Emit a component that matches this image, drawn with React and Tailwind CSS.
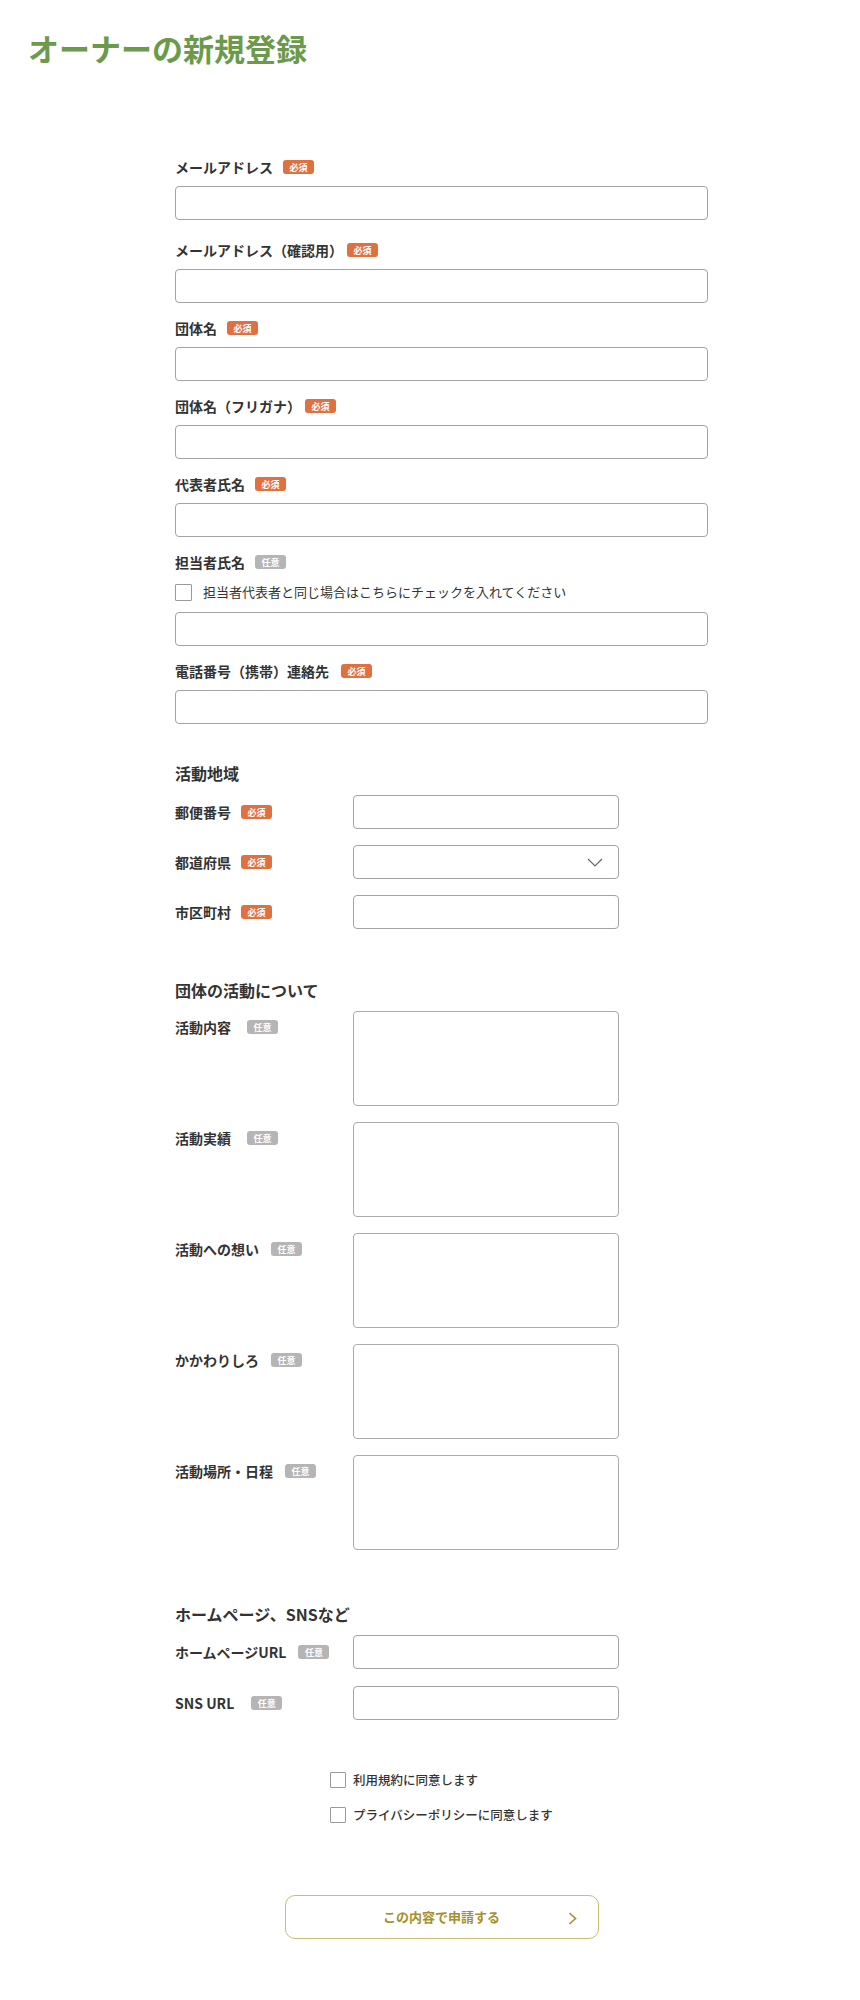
import React from "react";

const Badge = ({ required, className = "" }) => (
  <span
    className={
      "inline-flex items-center justify-center w-[31px] h-[14px] rounded-[3px] text-[9px] font-bold leading-none text-white " +
      (required ? "bg-[#e0703f] " : "bg-[#b5b5b5] ") +
      className
    }
  >
    {required ? "必須" : "任意"}
  </span>
);

const Label = ({ children, required, gap = "ml-2.5" }) => (
  <div className="flex items-center h-5 text-[14px] leading-5 font-bold text-[#333]">
    <span>{children}</span>
    <Badge required={required} className={gap} />
  </div>
);

const TextInput = ({ className = "" }) => (
  <input
    type="text"
    className={"block h-[34px] rounded-[4px] border border-[#a3a3a3] bg-white px-3 text-sm outline-none " + className}
  />
);

const Box = ({ className = "" }) => (
  <span className={"inline-block shrink-0 border border-[#9a9a9a] rounded-[1px] bg-white " + className}></span>
);

const Field = ({ label, required, gap, mb = "mb-[15px]" }) => (
  <div className={mb}>
    <Label required={required} gap={gap}>{label}</Label>
    <TextInput className="mt-[9px] w-full" />
  </div>
);

const Row = ({ label, required, gap, children }) => (
  <div className="flex items-center">
    <div className="w-[178px]">
      <Label required={required} gap={gap}>{label}</Label>
    </div>
    {children}
  </div>
);

const AreaRow = ({ label, gap }) => (
  <div className="flex items-start">
    <div className="w-[178px] pt-[6px]">
      <Label required={false} gap={gap}>{label}</Label>
    </div>
    <textarea className="block w-[266px] h-[95px] resize-none rounded-[4px] border border-[#ababab] bg-white outline-none" />
  </div>
);

const Heading = ({ children, className = "" }) => (
  <h2 className={"text-[16px] leading-6 font-bold text-[#333] " + className}>{children}</h2>
);

export default function App() {
  return (
    <div className="min-h-screen bg-white font-['Noto_Sans_CJK_JP',sans-serif] text-[#333]">
      <h1 className="pl-[28px] pt-[25px] text-[31px] leading-[46px] font-bold text-[#6c9a4b]">
        オーナーの新規登録
      </h1>

      <form className="ml-[175px] w-[533px] mt-[86px] pb-[60px]">
        <Field label="メールアドレス" required mb="mb-5" />
        <Field label="メールアドレス（確認用）" required gap="ml-1" />
        <Field label="団体名" required />
        <Field label="団体名（フリガナ）" required gap="ml-1" />
        <Field label="代表者氏名" required />

        <div className="mb-[15px]">
          <Label required={false}>担当者氏名</Label>
          <label className="mt-[9px] flex items-center h-[22px] gap-[11px] text-[13px] text-[#333]">
            <Box className="w-[17px] h-[17px]" />
            <span>担当者代表者と同じ場合はこちらにチェックを入れてください</span>
          </label>
          <TextInput className="mt-[9px] w-full" />
        </div>

        <Field label="電話番号（携帯）連絡先" required gap="ml-3" mb="mb-0" />

        {/* 活動地域 */}
        <Heading className="mt-[37px] mb-[10px]">活動地域</Heading>
        <div className="flex flex-col gap-[16px]">
          <Row label="郵便番号" required>
            <TextInput className="w-[266px]" />
          </Row>
          <Row label="都道府県" required>
            <div className="relative w-[266px] h-[34px] rounded-[4px] border border-[#a3a3a3] bg-white">
              <svg
                className="absolute right-[15px] top-[12px]"
                width="16"
                height="9"
                viewBox="0 0 16 9"
                fill="none"
                stroke="#666"
                strokeWidth="1.2"
              >
                <path d="M1 1l7 7 7-7" />
              </svg>
            </div>
          </Row>
          <Row label="市区町村" required>
            <TextInput className="w-[266px]" />
          </Row>
        </div>

        {/* 団体の活動について */}
        <Heading className="mt-[49px] mb-[9px]">団体の活動について</Heading>
        <div className="flex flex-col gap-[16px]">
          <AreaRow label="活動内容" gap="ml-4" />
          <AreaRow label="活動実績" gap="ml-4" />
          <AreaRow label="活動への想い" gap="ml-3" />
          <AreaRow label="かかわりしろ" gap="ml-3" />
          <AreaRow label="活動場所・日程" gap="ml-3" />
        </div>

        {/* ホームページ、SNSなど */}
        <Heading className="mt-[52px] mb-[9px]">ホームページ、SNSなど</Heading>
        <div className="flex flex-col gap-[17px]">
          <Row label="ホームページURL" required={false} gap="ml-3">
            <TextInput className="w-[266px]" />
          </Row>
          <Row label="SNS URL" required={false} gap="ml-[17px]">
            <TextInput className="w-[266px]" />
          </Row>
        </div>

        <div className="mx-auto w-fit mt-[50px] flex flex-col gap-[15px]">
          <label className="flex items-center h-5 gap-[7px] text-[12.5px] font-medium text-[#333]">
            <Box className="w-4 h-4" />
            <span>利用規約に同意します</span>
          </label>
          <label className="flex items-center h-5 gap-[7px] text-[12.5px] font-medium text-[#333]">
            <Box className="w-4 h-4" />
            <span>プライバシーポリシーに同意します</span>
          </label>
        </div>

        <button
          type="button"
          className="relative mx-auto mt-[70px] flex items-center justify-center w-[314px] h-[44px] rounded-[10px] border border-[#cbbd72] bg-white text-[13px] font-bold text-[#a68f2c]"
        >
          この内容で申請する
          <svg
            className="absolute right-[21px] top-[16px]"
            width="9"
            height="13"
            viewBox="0 0 9 13"
            fill="none"
            stroke="#a68f2c"
            strokeWidth="1.6"
          >
            <path d="M1.5 1l6 5.5-6 5.5" />
          </svg>
        </button>
      </form>
    </div>
  );
}
